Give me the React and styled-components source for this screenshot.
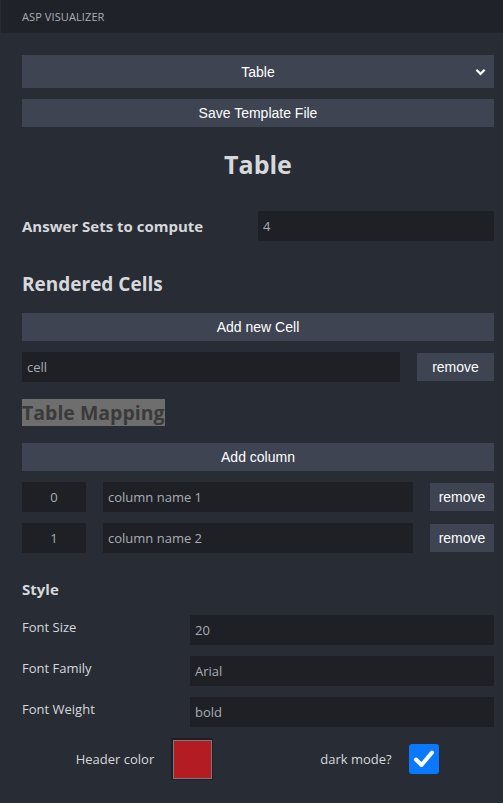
import React from 'react';
import styled, { createGlobalStyle } from 'styled-components';

const Global = createGlobalStyle`
  html, body {
    margin: 0;
    padding: 0;
    background: #282c34;
  }
  body {
    font-family: "Open Sans", "Noto Sans", sans-serif;
    color: #d4d7dc;
  }
  * { box-sizing: border-box; }
`;

const columns = [
  { id: 0, name: 'column name 1' },
  { id: 1, name: 'column name 2' },
];

const styleFields = [
  { label: 'Font Size', value: '20' },
  { label: 'Font Family', value: 'Arial' },
  { label: 'Font Weight', value: 'bold' },
];

const App = () => {
  return (
    <Page>
      <Global />
      <Header>ASP VISUALIZER</Header>
      <Content>
        <SelectWrap>
          <Select defaultValue="Table">
            <option>Table</option>
            <option>Graph</option>
          </Select>
          <Chevron viewBox="0 0 12 8">
            <path d="M1.5 1.5 L6 6 L10.5 1.5" fill="none" stroke="#fff" strokeWidth="2.4" />
          </Chevron>
        </SelectWrap>
        <Button top="11px">Save Template File</Button>

        <Title>Table</Title>

        <AnswerRow>
          <BoldLabel>Answer Sets to compute</BoldLabel>
          <Input width="236px" defaultValue="4" />
        </AnswerRow>

        <SectionTitle>Rendered Cells</SectionTitle>
        <Button top="0">Add new Cell</Button>
        <Row top="11px">
          <Input width="378px" defaultValue="cell" />
          <SmallButton width="77px">remove</SmallButton>
        </Row>

        <SectionTitle marked>Table Mapping</SectionTitle>
        <Button top="0">Add column</Button>
        {columns.map((c) => (
          <Row key={c.id} top="11px">
            <Input width="64px" center defaultValue={c.id} />
            <Input width="310px" defaultValue={c.name} />
            <SmallButton width="64px">remove</SmallButton>
          </Row>
        ))}

        <SubTitle>Style</SubTitle>
        {styleFields.map((f) => (
          <FieldRow key={f.label}>
            <FieldLabel>{f.label}</FieldLabel>
            <Input width="304px" defaultValue={f.value} />
          </FieldRow>
        ))}

        <BottomRow>
          <BottomCell shift="9px">
            <span>Header color</span>
            <Swatch color="#b41c24" />
          </BottomCell>
          <BottomCell shift="7px">
            <span>dark mode?</span>
            <CheckBox>
              <svg width="22" height="20" viewBox="0 0 22 20">
                <path d="M3 10.5 L8.5 16 L19 3.5" fill="none" stroke="#fff" strokeWidth="4" strokeLinecap="round" strokeLinejoin="round" />
              </svg>
            </CheckBox>
          </BottomCell>
        </BottomRow>
      </Content>
    </Page>
  );
};

export default App;

const Page = styled.div`
  width: 503px;
  min-height: 803px;
  background: #282c34;
`;

const Header = styled.div`
  height: 33px;
  margin-left: 1px;
  background: #1f2229;
  padding-left: 21px;
  display: flex;
  align-items: center;
  font-size: 11px;
  letter-spacing: 0.1px;
  color: #a9aeb6;
`;

const Content = styled.div`
  padding: 22px 9px 0 22px;
  display: flex;
  flex-direction: column;
`;

const SelectWrap = styled.div`
  position: relative;
  height: 33px;
`;

const Select = styled.select`
  appearance: none;
  width: 100%;
  height: 33px;
  border: none;
  background: #3e4452;
  color: #fff;
  font-family: "Liberation Sans", Arial, sans-serif;
  font-size: 14px;
  text-align: center;
  text-align-last: center;
  outline: none;
`;

const Chevron = styled.svg`
  position: absolute;
  right: 8px;
  top: 13px;
  width: 11px;
  height: 8px;
  pointer-events: none;
`;

const Button = styled.button`
  margin-top: ${(p) => p.top};
  height: 28px;
  width: 100%;
  border: none;
  background: #3e4452;
  color: #fff;
  font-family: "Liberation Sans", Arial, sans-serif;
  font-size: 14px;
  padding: 0;
`;

const SmallButton = styled(Button)`
  margin-top: 1px;
  width: ${(p) => p.width};
  flex: none;
`;

const Title = styled.h1`
  margin: 18px 0 0;
  height: 38px;
  line-height: 38px;
  text-align: center;
  font-size: 25px;
  font-weight: 700;
  color: #d6d8dc;
`;

const AnswerRow = styled.div`
  margin-top: 28px;
  display: flex;
  align-items: center;
  justify-content: space-between;
`;

const BoldLabel = styled.span`
  font-size: 15px;
  font-weight: 700;
  color: #d6d8dc;
`;

const Input = styled.input`
  width: ${(p) => p.width};
  flex: none;
  height: 30px;
  border: none;
  outline: none;
  background: #1e2025;
  color: #a7adb7;
  font-family: "Open Sans", "Noto Sans", sans-serif;
  font-size: 13px;
  padding: 0 5px;
  text-align: ${(p) => (p.center ? 'center' : 'left')};
`;

const SectionTitle = styled.h2`
  align-self: flex-start;
  margin: ${(p) => (p.marked ? '17px 0 17px' : '30px 0 15px')};
  height: 27px;
  line-height: 27px;
  font-size: ${(p) => (p.marked ? '19.5px' : '19px')};
  font-weight: 700;
  color: ${(p) => (p.marked ? '#3a3a3a' : '#d6d8dc')};
  background: ${(p) => (p.marked ? '#6e6e6e' : 'transparent')};
`;

const Row = styled.div`
  margin-top: ${(p) => p.top};
  display: flex;
  justify-content: space-between;
  align-items: flex-start;
`;

const SubTitle = styled.h3`
  margin: 25px 0 15px;
  height: 22px;
  line-height: 22px;
  font-size: 15px;
  font-weight: 700;
  color: #d6d8dc;
`;

const FieldRow = styled.div`
  display: flex;
  justify-content: space-between;
  align-items: flex-start;
  margin-bottom: 11px;
`;

const FieldLabel = styled.span`
  padding-top: 2px;
  font-size: 13px;
  line-height: 20px;
  color: #d6d8dc;
`;

const BottomRow = styled.div`
  display: grid;
  grid-template-columns: 1fr 1fr;
`;

const BottomCell = styled.div`
  display: flex;
  align-items: center;
  justify-content: center;
  gap: 17px;
  height: 42px;
  font-size: 13px;
  color: #d6d8dc;
  padding-left: ${(p) => p.shift};
`;

const Swatch = styled.div`
  width: 42px;
  height: 42px;
  background: #1e2025;
  padding: 2px 3px 3px 2px;
  &::after {
    content: '';
    display: block;
    width: 100%;
    height: 100%;
    border: 1px solid #7a7a7a;
    background: ${(p) => p.color};
  }
`;

const CheckBox = styled.div`
  width: 30px;
  height: 30px;
  border-radius: 3px;
  background: #0a78ff;
  display: flex;
  align-items: center;
  justify-content: center;
`;
